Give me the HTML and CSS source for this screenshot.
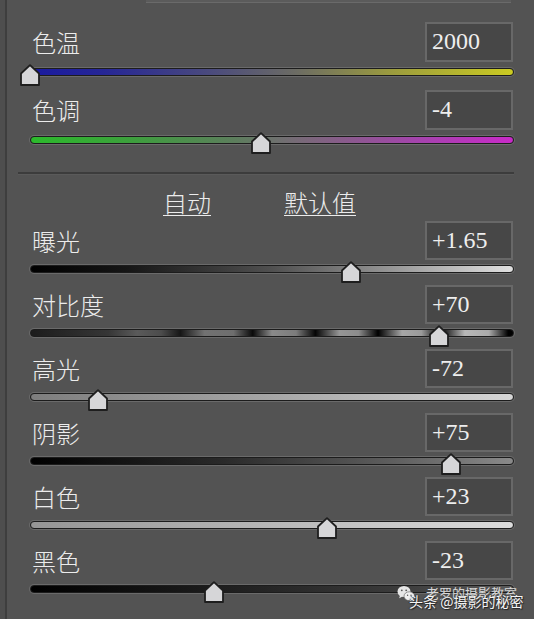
FILE: index.html
```html
<!DOCTYPE html>
<html lang="zh-CN">
<head>
<meta charset="utf-8">
<title>基本</title>
<link rel="stylesheet" href="styles.css">
</head>
<body>
<div class="page">
  <div class="strip"></div>
  <main class="panel">
    <div class="topbox"></div>

    <section class="row row-top">
      <div class="head"><span class="label">色温</span><span class="val">2000</span></div>
      <div class="slider"><div class="track t-temp"></div><svg class="thumb" style="left:0%" viewBox="0 0 20 22" width="20" height="22"><path d="M10 1.2 L19 9.5 V21 H1 V9.5 Z"/></svg></div>
    </section>
    <section class="row row-top">
      <div class="head"><span class="label">色调</span><span class="val">-4</span></div>
      <div class="slider"><div class="track t-tint"></div><svg class="thumb" style="left:47.7%" viewBox="0 0 20 22" width="20" height="22"><path d="M10 1.2 L19 9.5 V21 H1 V9.5 Z"/></svg></div>
    </section>

    <div class="sep"></div>

    <div class="links"><a class="link">自动</a><a class="link">默认值</a></div>

    <section class="row">
      <div class="head"><span class="label">曝光</span><span class="val">+1.65</span></div>
      <div class="slider"><div class="track t-expo"></div><svg class="thumb" style="left:66.3%" viewBox="0 0 20 22" width="20" height="22"><path d="M10 1.2 L19 9.5 V21 H1 V9.5 Z"/></svg></div>
    </section>
    <section class="row">
      <div class="head"><span class="label">对比度</span><span class="val">+70</span></div>
      <div class="slider"><div class="track t-cont"></div><svg class="thumb" style="left:84.5%" viewBox="0 0 20 22" width="20" height="22"><path d="M10 1.2 L19 9.5 V21 H1 V9.5 Z"/></svg></div>
    </section>
    <section class="row">
      <div class="head"><span class="label">高光</span><span class="val">-72</span></div>
      <div class="slider"><div class="track t-high"></div><svg class="thumb" style="left:14%" viewBox="0 0 20 22" width="20" height="22"><path d="M10 1.2 L19 9.5 V21 H1 V9.5 Z"/></svg></div>
    </section>
    <section class="row">
      <div class="head"><span class="label">阴影</span><span class="val">+75</span></div>
      <div class="slider"><div class="track t-shad"></div><svg class="thumb" style="left:87%" viewBox="0 0 20 22" width="20" height="22"><path d="M10 1.2 L19 9.5 V21 H1 V9.5 Z"/></svg></div>
    </section>
    <section class="row">
      <div class="head"><span class="label">白色</span><span class="val">+23</span></div>
      <div class="slider"><div class="track t-white"></div><svg class="thumb" style="left:61.4%" viewBox="0 0 20 22" width="20" height="22"><path d="M10 1.2 L19 9.5 V21 H1 V9.5 Z"/></svg></div>
    </section>
    <section class="row">
      <div class="head"><span class="label">黑色</span><span class="val">-23</span></div>
      <div class="slider"><div class="track t-black"></div><svg class="thumb" style="left:38%" viewBox="0 0 20 22" width="20" height="22"><path d="M10 1.2 L19 9.5 V21 H1 V9.5 Z"/></svg></div>
    </section>
  </main>

  <div class="watermark">
    <svg class="wx" viewBox="0 0 18 17" width="18" height="17">
      <ellipse cx="7" cy="6.5" rx="6.5" ry="5.5" fill="#e6e6e6"/>
      <path d="M3 10.5 L2.2 13.2 L5.5 11.5 Z" fill="#e6e6e6"/>
      <circle cx="4.8" cy="5.3" r="0.9" fill="#555"/>
      <circle cx="9.2" cy="5.3" r="0.9" fill="#555"/>
      <ellipse cx="12.3" cy="11.2" rx="5.3" ry="4.4" fill="#f0f0f0" stroke="#555" stroke-width="0.6"/>
      <path d="M14.5 14.5 L15.6 16.6 L12.8 15.4 Z" fill="#f0f0f0"/>
      <circle cx="10.6" cy="10.3" r="0.7" fill="#555"/>
      <circle cx="14" cy="10.3" r="0.7" fill="#555"/>
    </svg>
    <span class="wm-back">老罗的摄影教室</span>
    <span class="wm-front">头条 @摄影的秘密</span>
  </div>
</div>
</body>
</html>
```
FILE: styles.css
```css
html, body {
  margin: 0;
  padding: 0;
}
body {
  width: 534px;
  height: 619px;
  overflow: hidden;
  background: #535353;
  font-family: "Noto Sans CJK SC", "Noto Sans CJK JP", sans-serif;
  color: #ebebeb;
}
.page {
  position: relative;
  display: flex;
  height: 619px;
}
.strip {
  width: 5px;
  flex: none;
  background: #4e4e4e;
  border-right: 2px solid #3e3e3e;
}
.panel {
  flex: 1;
  padding: 0 18px 0 21px;
  display: flex;
  flex-direction: column;
}
.topbox {
  height: 2px;
  width: 365px;
  margin-left: 118px;
  background: #5b5b5b;
  border-bottom: 1px solid #6a6a6a;
}
.row {
  display: flex;
  flex-direction: column;
  height: 64px;
}
.row-top {
  height: 68px;
}
.row-top:first-of-type {
  margin-top: 19px;
}
.head {
  display: flex;
  justify-content: space-between;
  align-items: center;
  height: 39px;
  padding-right: 3px;
}
.row-top .head {
  height: 40px;
}
.label {
  padding-left: 4px;
  font-size: 24px;
  font-weight: 300;
  line-height: 1;
  color: #ececec;
}
.val {
  box-sizing: border-box;
  width: 88px;
  height: 100%;
  padding-left: 5px;
  border: 2px solid #686868;
  background: #474747;
  font-family: "Liberation Serif", "Times New Roman", serif;
  font-size: 24px;
  line-height: 35px;
  color: #eeeeee;
}
.slider {
  position: relative;
  padding-top: 5px;
  margin: 0 2px;
}
.row-top .slider {
  padding-top: 6px;
}
.track {
  box-sizing: border-box;
  height: 8px;
  border: 1px solid #1c1c1c;
  border-radius: 4px;
  box-shadow: 0 0 0 1px #6a6a6a;
}
.thumb {
  position: absolute;
  top: 1px;
  margin-left: -10px;
}
.row-top .thumb {
  top: 2px;
}
.thumb path {
  fill: #d6d6d8;
  stroke: #1e1e1e;
  stroke-width: 1.8;
  stroke-linejoin: round;
}
.t-temp {
  background: linear-gradient(90deg, #1a1aa0 0%, #262696 15%, #4c4c7c 38%, #6c6c64 55%, #9c9c3e 75%, #cbcb22 100%);
}
.t-tint {
  background: linear-gradient(90deg, #2cba2c 0%, #3ca03c 20%, #5c7e5c 42%, #7c667c 58%, #a444ac 80%, #c82ac8 100%);
}
.t-expo {
  background: linear-gradient(90deg, #000 0%, #161616 20%, #505050 50%, #9a9a9a 76%, #e0e0e0 100%);
}
.t-cont {
  background: linear-gradient(90deg, #1c1c1c 0%, #363636 16%, #5a5a5a 22%, #4c4c4c 27%, #161616 31%, #727272 36%, #6e6e6e 42%, #0a0a0a 46%, #8a8a8a 50%, #7c7c7c 55%, #050505 59%, #969696 64%, #8c8c8c 68%, #000 72%, #a6a6a6 77%, #9a9a9a 81%, #000 85%, #b8b8b8 90%, #aaaaaa 95%, #000 99%);
}
.t-high {
  background: linear-gradient(90deg, #7e7e7e 0%, #a6a6a6 50%, #d6d6d6 100%);
}
.t-shad {
  background: linear-gradient(90deg, #000 0%, #2a2a2a 40%, #5e5e5e 75%, #8a8a8a 100%);
}
.t-white {
  background: linear-gradient(90deg, #959595 0%, #b8b8b8 50%, #dcdcdc 100%);
}
.t-black {
  background: linear-gradient(90deg, #000 0%, #1e1e1e 40%, #3a3a3a 75%, #5a5a5a 100%);
}
.sep {
  height: 0;
  margin: 14px 2px 0 -10px;
  border-top: 2px solid #3c3c3c;
  border-bottom: 1px solid #5a5a5a;
}
.links {
  display: flex;
  gap: 73px;
  height: 46px;
  box-sizing: border-box;
  padding: 9px 0 0 135px;
}
.link {
  font-size: 24px;
  font-weight: 300;
  line-height: 36px;
  color: #ececec;
  text-decoration: underline;
  text-decoration-thickness: 1px;
  text-underline-offset: 3px;
}
.watermark {
  position: absolute;
  left: 397px;
  top: 584px;
  width: 130px;
  height: 30px;
}
.wx {
  position: absolute;
  left: 0;
  top: 1px;
}
.wm-back {
  position: absolute;
  left: 29px;
  top: 1px;
  font-size: 13px;
  line-height: 16px;
  color: #d8d8d8;
  white-space: nowrap;
}
.wm-front {
  position: absolute;
  left: 12px;
  top: 8px;
  font-size: 14px;
  line-height: 18px;
  color: #f4f4f4;
  white-space: nowrap;
  text-shadow: 1px 1px 1px #222, -1px 0 1px #333;
}
```
